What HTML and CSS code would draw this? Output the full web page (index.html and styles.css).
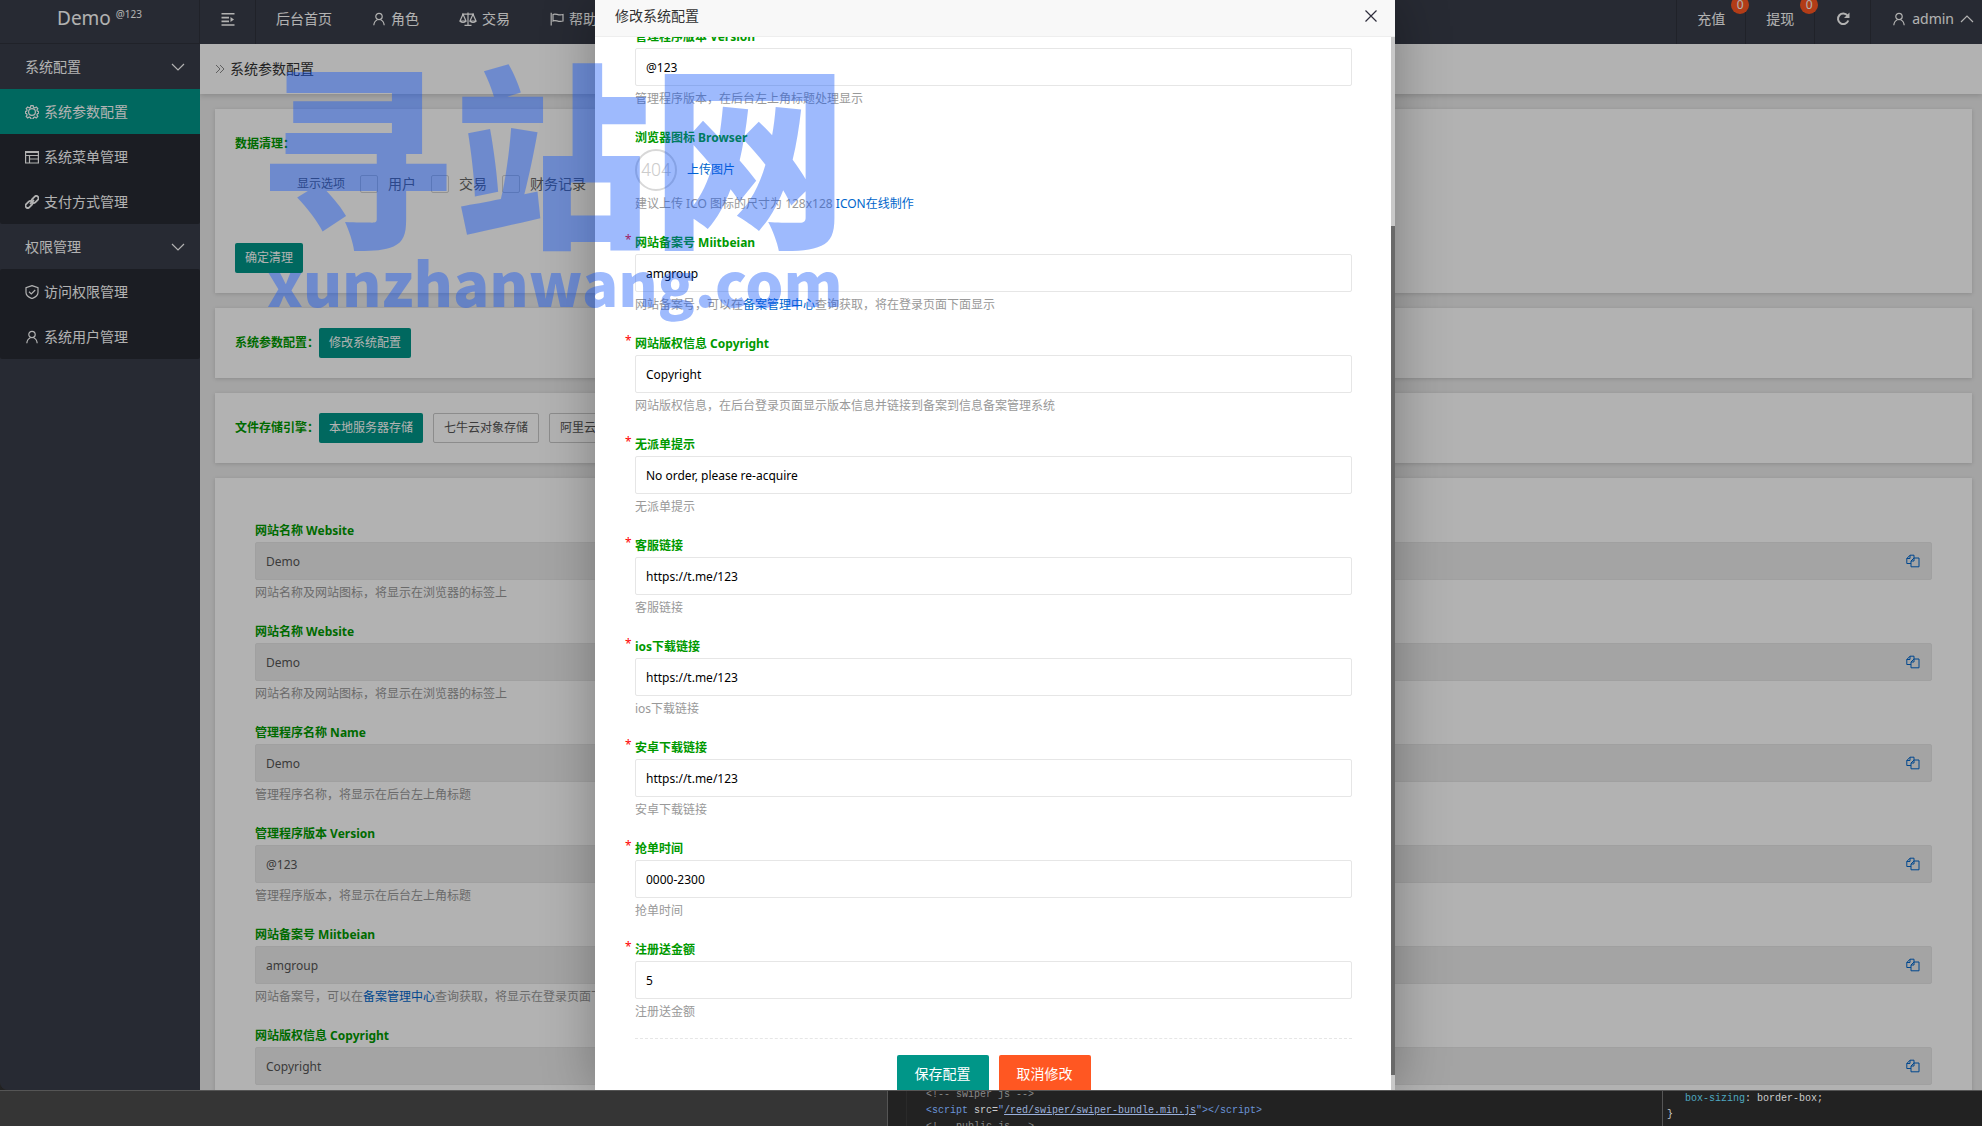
FILE: index.html
```html
<!DOCTYPE html>
<html lang="zh-CN">
<head>
<meta charset="utf-8">
<title>系统参数配置</title>
<link rel="stylesheet" href="styles.css">
</head>
<body>
<svg class="defs" aria-hidden="true">
  <symbol id="user" viewBox="0 0 14 14"><circle cx="7" cy="4.5" r="3.2"/><path d="M1.8 13.2c.3-3 1.7-4.700 3.600-5.500M12.200 13.200c-.3-3-1.700-4.700-3.600-5.500"/></symbol>
  <symbol id="chevron" viewBox="0 0 14 14"><path d="M1 4l6 6 6-6"/></symbol>
  <symbol id="copy" viewBox="0 0 14 14"><path d="M5 9.500H.8V4.500L4 1.200h4V4M.8 4.500H4V1.200M5 12.800V7l3-3h5v8.800zM5 7h3V4"/></symbol>
</svg>
<div class="window">
  <header class="topbar">
    <a class="logo" href="#">Demo <sup>@123</sup></a>
    <button class="fold" type="button" aria-label="折叠菜单"><svg class="icon" viewBox="0 0 14 14"><path d="M.5 1.800h13M.5 5.600h7.500M.5 9.400h7.500M.5 13h13" /><path d="M9.500 5l3.500 2.500L9.500 10z" fill="currentColor" stroke="none"/></svg></button>
    <nav class="nav">
      <a href="#">后台首页</a>
      <a href="#"><svg class="icon"><use href="#user"/></svg>角色</a>
      <a href="#"><svg class="icon wide" viewBox="0 0 18 14"><path d="M9 .5v13M5.500 13.400h7M3 2.200h12M4 2.200L1 9h6zM14 2.200L11 9h6zM1 9.200q3 2.600 6 0M11 9.200q3 2.600 6 0"/></svg>交易</a>
      <a href="#"><svg class="icon" viewBox="0 0 14 14"><path d="M1.200 .8v12.700M3 2.500c3-1.800 5 1.800 10 0v6.500c-5 1.800-7-1.800-10 0z"/></svg>帮助</a>
    </nav>
    <nav class="tools">
      <a href="#">充值<span class="badge">0</span></a>
      <a href="#">提现<span class="badge">0</span></a>
      <a href="#" class="refresh" aria-label="刷新"><svg class="icon" viewBox="0 0 14 14"><path stroke-width="2" d="M11.500 3.500A5.300 5.300 0 1 0 12.300 8.500"/><path d="M13.500 .5v5.500H8z" fill="currentColor" stroke="none"/></svg></a>
      <a href="#" class="account"><svg class="icon"><use href="#user"/></svg>admin<svg class="icon up"><use href="#chevron"/></svg></a>
    </nav>
  </header>
  <div class="body">
    <aside class="side">
      <button class="group" type="button">系统配置<svg class="icon"><use href="#chevron"/></svg></button>
      <div class="sub">
        <a class="active" href="#"><svg class="icon" viewBox="0 0 14 14"><circle cx="7" cy="7" r="3.400"/><path d="M5.900 .6h2.200l.4 1.700 1.300.6 1.500-.9 1.500 1.500-.9 1.500.5 1.200 1.200.3v1.800l-1.200.4-.5 1.200.9 1.500-1.500 1.500-1.500-.9-1.300.6-.4 1.600H5.900l-.4-1.600-1.300-.6-1.500.9-1.500-1.500.9-1.500-.5-1.200L.4 8.300V6.500l1.200-.3.5-1.200-.9-1.500L2.700 2l1.500.9 1.300-.6z"/></svg>系统参数配置</a>
        <a href="#"><svg class="icon" viewBox="0 0 14 14"><path d="M.6 1.500h12.800v11.500H.6zM.6 2.500h12.800M.6 5.500h12.800M4.500 5.500V13M4.500 9h9"/></svg>系统菜单管理</a>
        <a href="#"><svg class="icon" viewBox="0 0 14 14"><g stroke-width="1.800"><rect x="6" y="2.300" width="8" height="4.400" rx="2.200" transform="rotate(-45 10 4.500)"/><rect x="0" y="7.300" width="8" height="4.400" rx="2.200" transform="rotate(-45 4 9.500)"/><path d="M5 9l4-4"/></g></svg>支付方式管理</a>
      </div>
      <button class="group" type="button">权限管理<svg class="icon"><use href="#chevron"/></svg></button>
      <div class="sub">
        <a href="#"><svg class="icon" viewBox="0 0 14 14"><path d="M7 .6l6 2v5c0 3-3 4.900-6 6-3-1.100-6-3-6-6v-5zM4 6.800l2.300 2.200L10.200 5"/></svg>访问权限管理</a>
        <a href="#"><svg class="icon"><use href="#user"/></svg>系统用户管理</a>
      </div>
    </aside>
    <main class="main">
      <h1 class="crumb"><svg class="icon" viewBox="0 0 14 14"><path d="M3 3l4 4-4 4M7 3l4 4-4 4"/></svg>系统参数配置</h1>
      <section class="card clean">
        <h2 class="title">数据清理：</h2>
        <div class="checks">
          <span>显示选项</span>
          <label><input type="checkbox">用户</label>
          <label><input type="checkbox">交易</label>
          <label><input type="checkbox">财务记录</label>
        </div>
        <button class="btn" type="button">确定清理</button>
      </section>
      <section class="card row"><h2 class="title">系统参数配置：</h2><button class="btn" type="button">修改系统配置</button></section>
      <section class="card row"><h2 class="title">文件存储引擎：</h2><button class="btn" type="button">本地服务器存储</button><button class="btn plain" type="button">七牛云对象存储</button><button class="btn plain" type="button">阿里云对象存储</button></section>
      <section class="card params">
        <div class="field"><label for="p1">网站名称 Website</label><div class="readonly"><input id="p1" readonly value="Demo"><button type="button" aria-label="复制"><svg class="icon"><use href="#copy"/></svg></button></div><p>网站名称及网站图标，将显示在浏览器的标签上</p></div>
        <div class="field"><label for="p2">网站名称 Website</label><div class="readonly"><input id="p2" readonly value="Demo"><button type="button" aria-label="复制"><svg class="icon"><use href="#copy"/></svg></button></div><p>网站名称及网站图标，将显示在浏览器的标签上</p></div>
        <div class="field"><label for="p3">管理程序名称 Name</label><div class="readonly"><input id="p3" readonly value="Demo"><button type="button" aria-label="复制"><svg class="icon"><use href="#copy"/></svg></button></div><p>管理程序名称，将显示在后台左上角标题</p></div>
        <div class="field"><label for="p4">管理程序版本 Version</label><div class="readonly"><input id="p4" readonly value="@123"><button type="button" aria-label="复制"><svg class="icon"><use href="#copy"/></svg></button></div><p>管理程序版本，将显示在后台左上角标题</p></div>
        <div class="field"><label for="p5">网站备案号 Miitbeian</label><div class="readonly"><input id="p5" readonly value="amgroup"><button type="button" aria-label="复制"><svg class="icon"><use href="#copy"/></svg></button></div><p>网站备案号，可以在<a href="#">备案管理中心</a>查询获取，将显示在登录页面下面</p></div>
        <div class="field"><label for="p6">网站版权信息 Copyright</label><div class="readonly"><input id="p6" readonly value="Copyright"><button type="button" aria-label="复制"><svg class="icon"><use href="#copy"/></svg></button></div></div>
      </section>
    </main>
  </div>
  <div class="shade">
    <form class="modal" role="dialog" aria-label="修改系统配置">
      <div class="modal-head"><span>修改系统配置</span><button type="button" aria-label="关闭"><svg class="icon" viewBox="0 0 14 14"><path d="M1.500 1.500l11 11M12.500 1.500l-11 11"/></svg></button></div>
      <div class="modal-main">
        <div class="fields">
          <div class="field"><label for="f1">管理程序版本 Version</label><input id="f1" value="@123"><p>管理程序版本，在后台左上角标题处理显示</p></div>
          <div class="field"><label for="f2">浏览器图标 Browser</label><div class="upload"><svg viewBox="0 0 42 42"><circle cx="21" cy="21" r="20"/><text x="21" y="27" text-anchor="middle">404</text></svg><button id="f2" type="button">上传图片</button></div><p>建议上传 ICO 图标的尺寸为 128x128 <a href="#">ICON在线制作</a></p></div>
          <div class="field must"><label for="f3">网站备案号 Miitbeian</label><input id="f3" value="amgroup"><p>网站备案号，可以在<a href="#">备案管理中心</a>查询获取，将在登录页面下面显示</p></div>
          <div class="field must"><label for="f4">网站版权信息 Copyright</label><input id="f4" value="Copyright"><p>网站版权信息，在后台登录页面显示版本信息并链接到备案到信息备案管理系统</p></div>
          <div class="field must"><label for="f5">无派单提示</label><input id="f5" value="No order, please re-acquire"><p>无派单提示</p></div>
          <div class="field must"><label for="f6">客服链接</label><input id="f6" value="https://t.me/123"><p>客服链接</p></div>
          <div class="field must"><label for="f7">ios下载链接</label><input id="f7" value="https://t.me/123"><p>ios下载链接</p></div>
          <div class="field must"><label for="f8">安卓下载链接</label><input id="f8" value="https://t.me/123"><p>安卓下载链接</p></div>
          <div class="field must"><label for="f9">抢单时间</label><input id="f9" value="0000-2300"><p>抢单时间</p></div>
          <div class="field must"><label for="f10">注册送金额</label><input id="f10" value="5"><p>注册送金额</p></div>
          <div class="actions"><button class="btn big" type="button">保存配置</button><button class="btn big danger" type="button">取消修改</button></div>
        </div>
        <div class="scroll"><span></span></div>
      </div>
    </form>
  </div>
  <div class="mark" aria-hidden="true"><span class="mark-name">寻站网</span><span class="mark-site">xunzhanwang.com</span></div>
</div>
<footer class="editor">
  <div class="gutter"></div>
  <pre class="code"><i>&lt;!-- swiper js --&gt;</i>
<b>&lt;script</b> src=<b>"<u>/red/swiper/swiper-bundle.min.js</u>"&gt;&lt;/script&gt;</b>
<i>&lt;!-- public js --&gt;</i></pre>
  <pre class="css">   <b>box-sizing</b>: border-box;
}</pre>
</footer>
</body>
</html>
```
FILE: styles.css
```css
* { box-sizing: border-box; }
body { margin: 0; height: 100vh; display: flex; flex-direction: column; overflow: hidden; background: #222; font: 14px/20px "Noto Sans", "Noto Sans CJK SC", sans-serif; color: #333; }
h1, h2, p, pre { margin: 0; font-weight: 400; }
a { color: #06c; text-decoration: none; }
button, input { font: inherit; color: inherit; margin: 0; border: 0; padding: 0; background: none; }
.defs { position: absolute; width: 0; height: 0; }
.icon { width: 14px; height: 14px; flex: none; fill: none; stroke: currentColor; stroke-width: 1.2; }
.icon.wide { width: 18px; }
.icon.up { transform: rotate(180deg); }

.window { position: relative; flex: 1; min-height: 0; display: flex; flex-direction: column; overflow: hidden; background: #393d49; border-radius: 0 0 0 8px; }
.topbar { flex: none; display: flex; height: 44px; background: #393d49; color: #fff; isolation: isolate; }
.topbar a { color: inherit; }
.logo { width: 200px; border-right: 1px solid #2e313b; border-bottom: 1px solid #2e313b; font-size: 19px; line-height: 36px; text-align: center; }
.logo sup { font-size: 10px; line-height: 10px; }
.fold { width: 56px; padding: 0 0 6px; border-right: 1px solid #2e313b; }
.fold .icon { display: block; margin: auto; stroke-width: 1.6; }
.nav, .tools { display: flex; }
.nav a, .tools a { display: flex; align-items: center; gap: 5px; padding: 0 20px 6px; }
.tools { margin-left: auto; }
.tools a { position: relative; padding-left: 20px; border-left: 1px solid #2e313b; }
.tools .refresh { padding-left: 21px; }
.tools .account { padding: 0 8px 6px 21px; gap: 6px; }
.badge { position: absolute; right: -4px; top: -4px; z-index: 1; width: 18px; height: 18px; border-radius: 9px; background: #ff5722; font-size: 12px; line-height: 18px; text-align: center; }

.body { flex: 1; min-height: 0; display: flex; }
.side { width: 200px; flex: none; color: #fff; }
.group { display: flex; width: 100%; height: 45px; align-items: center; justify-content: space-between; padding: 0 15px 0 25px; }
.sub { background: rgba(0,0,0,.3); border-radius: 2px; }
.sub a { display: flex; height: 45px; align-items: center; gap: 5px; padding: 0 25px; color: #fff; }
.sub .active { background: #009688; }
.main { flex: 1; min-width: 0; background: #ebebeb; overflow: hidden; }
.crumb { display: flex; align-items: center; gap: 3px; height: 50px; padding: 0 13px; background: #fff; box-shadow: 0 2px 5px rgba(0,0,0,.15); font-size: 14px; }
.crumb .icon { color: #888; stroke-width: 1; }
.card { margin: 15px 10px 0 15px; padding: 20px; background: #fff; box-shadow: 0 1px 4px rgba(0,0,0,.15); }
.title { font-size: 12px; font-weight: 700; color: #090; }
.clean { padding-top: 25px; }
.checks { display: flex; align-items: center; gap: 15px; height: 40px; margin: 10px 0 39px; padding-left: 62px; color: #666; }
.checks span { font-size: 12px; }
.checks label { display: flex; align-items: center; gap: 10px; }
.checks input { appearance: none; width: 18px; height: 18px; border: 1px solid #d2d2d2; border-radius: 2px; }
.row { display: flex; align-items: center; gap: 10px; }
.row .title + .btn { margin-left: -10px; }
.btn { height: 30px; padding: 0 10px; border-radius: 2px; background: #009688; color: #fff; font-size: 12px; white-space: nowrap; }
.btn.plain { border: 1px solid #c9c9c9; background: #fff; color: #555; }
.params { padding: 42px 40px; }

.field { margin-bottom: 15px; font-size: 12px; }
.field label { display: block; width: max-content; height: 22px; line-height: 22px; font-weight: 700; color: #090; }
.field p { height: 26px; line-height: 26px; color: #999; white-space: nowrap; }
.field > input { display: block; width: 100%; height: 38px; padding: 0 10px; border: 1px solid #e6e6e6; border-radius: 2px; color: #000; }
.readonly { display: flex; align-items: center; height: 38px; padding: 0 11px 0 10px; border: 1px solid #e6e6e6; border-radius: 2px; background: #ebebeb; color: #555; }
.readonly input { flex: 1; min-width: 0; padding-top: 2px; }
.readonly button { height: 14px; color: #06c; }
.readonly .icon { display: block; stroke-width: 1; }
.must label { position: relative; }
.must label::before { content: "*"; position: absolute; left: -10px; top: -3px; color: #f00; font-weight: 400; }

.shade { position: absolute; inset: 0; display: flex; justify-content: center; padding-left: 8px; background: rgba(0,0,0,.3); }
.modal { display: flex; flex-direction: column; width: 800px; background: #fff; box-shadow: 1px 1px 50px rgba(0,0,0,.3); }
.modal-head { flex: none; display: flex; justify-content: space-between; height: 37px; padding: 0 17px 5px 20px; align-items: center; background: #f8f8f8; border-bottom: 1px solid #eee; }
.modal-head button { height: 14px; color: #2e2d3c; }
.modal-head .icon { display: block; }
.modal-main { flex: 1; min-height: 0; display: flex; overflow: hidden; }
.fields { flex: 1; margin-top: -11px; padding: 0 39px 0 40px; }
.scroll { width: 4px; background: #c8c8c8; padding: 189px 0 15px; }
.scroll span { display: block; height: 100%; background: #696969; }
.upload { display: flex; align-items: center; gap: 10px; height: 42px; }
.upload button { color: #06c; }
.upload svg { width: 42px; height: 42px; fill: none; stroke: #d8d8d8; stroke-width: 2; }
.upload text { fill: #ccc; stroke: none; font: 300 18px Roboto, sans-serif; }
.actions { display: flex; justify-content: center; gap: 10px; border-top: 1px dashed #e6e6e6; margin-top: -2px; padding-top: 16px; }
.btn.big { height: 38px; padding: 0 18px; font-size: 14px; }
.btn.danger { background: #ff5722; }

.mark { position: absolute; left: 257px; top: 53px; display: flex; flex-direction: column; pointer-events: none; color: rgb(2,76,250); opacity: .38; white-space: nowrap; }
.mark-name { font: 900 197px/186px "Noto Sans CJK SC", sans-serif; }
.mark-site { padding-left: 10px; font: 900 60px/84px "Noto Sans CJK SC", sans-serif; }

.editor { flex: none; display: flex; height: 36px; overflow: hidden; border-top: 1px solid #555; background: #222; color: #ccc; }
.editor pre { font: 10px/16px "Liberation Mono", monospace; }
.editor b { font-weight: 400; color: #6a94d8; }
.editor i { font-style: normal; color: #888; }
.gutter { width: 888px; flex: none; background: #353535; border-right: 1px solid #555; }
.code { flex: 1; margin-left: 18px; padding-left: 19px; border-left: 1px solid #2a2a2a; margin-top: -4px; }
.code u { color: #9ab0dc; }
.css { width: 320px; padding-left: 4px; border-left: 1px solid #555; }
.css b { color: #4fa8c0; }
```
